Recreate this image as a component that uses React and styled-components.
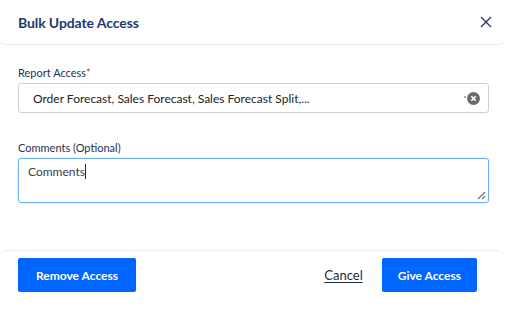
import React from 'react';
import styled, { createGlobalStyle } from 'styled-components';

const GlobalStyle = createGlobalStyle`
  html, body {
    margin: 0;
    padding: 0;
    background: #ffffff;
    font-family: Lato, "Liberation Sans", sans-serif;
  }
`;

const Dialog = styled.div`
  width: 504px;
  height: 313px;
  display: flex;
  flex-direction: column;
  background: #fff;
`;

const Header = styled.div`
  height: 45px;
  box-sizing: border-box;
  display: flex;
  align-items: center;
  justify-content: space-between;
  padding: 0 10px 0 18px;
  border-bottom: 1px solid #ececec;
  border-radius: 0 0 6px 6px;
  box-shadow: 0 1px 2px rgba(0, 0, 0, 0.03);
`;

const Title = styled.h2`
  margin: 0;
  font-size: 14px;
  font-weight: 700;
  color: #1c3a6e;
  letter-spacing: -0.1px;
`;

const CloseButton = styled.button`
  border: none;
  background: none;
  padding: 0;
  width: 16px;
  height: 16px;
  display: flex;
  align-items: center;
  justify-content: center;
  cursor: pointer;
`;

const Body = styled.div`
  flex: 1;
  padding: 21px 15px 0 18px;
  display: flex;
  flex-direction: column;
`;

const Field = styled.div`
  display: flex;
  flex-direction: column;
  margin-bottom: ${(p) => p.gap || 0}px;
`;

const Label = styled.label`
  font-size: 11px;
  color: #1f3150;
  line-height: 14px;
  margin-bottom: 3px;
  span {
    color: #e0393e;
  }
`;

const SelectBox = styled.div`
  height: 30px;
  box-sizing: border-box;
  border: 1px solid #cfcfcf;
  border-radius: 3px;
  display: flex;
  align-items: center;
  padding: 0 8px 0 14px;
  font-size: 12px;
  color: #222;
`;

const SelectText = styled.div`
  flex: 1;
  white-space: nowrap;
  overflow: hidden;
`;

const ClearIcon = styled.div`
  display: flex;
  align-items: center;
  gap: 1px;
  i {
    width: 2px;
    height: 2px;
    background: #8a8a8a;
    border-radius: 1px;
    margin-top: -3px;
  }
`;

const TextArea = styled.div`
  height: 45px;
  box-sizing: border-box;
  border: 1px solid #6fb0f2;
  border-radius: 3px;
  box-shadow: 0 0 2px rgba(90, 160, 240, 0.45);
  padding: 5px 9px;
  font-size: 12px;
  color: #3a3f4a;
  position: relative;
`;

const Caret = styled.span`
  display: inline-block;
  width: 1px;
  height: 15px;
  background: #1c2940;
  vertical-align: -3px;
`;

const Grip = styled.svg`
  position: absolute;
  right: 2px;
  bottom: 2px;
`;

const Footer = styled.div`
  height: 63px;
  box-sizing: border-box;
  border-top: 1px solid #ececec;
  border-radius: 6px 6px 0 0;
  display: flex;
  align-items: flex-start;
  padding: 7px 27px 0 18px;
`;

const Button = styled.button`
  height: 34px;
  padding: 0 ${(p) => p.px}px;
  border: none;
  border-radius: 2px;
  background: #0066ff;
  color: #fff;
  font-family: Lato, "Liberation Sans", sans-serif;
  font-weight: 700;
  font-size: 12px;
  cursor: pointer;
`;

const Spacer = styled.div`
  flex: 1;
`;

const CancelLink = styled.button`
  border: none;
  background: none;
  padding: 0;
  height: 34px;
  margin-right: 19px;
  font-family: Lato, "Liberation Sans", sans-serif;
  font-size: 13px;
  color: #1f2a3e;
  text-decoration: underline;
  text-underline-offset: 2px;
  cursor: pointer;
`;

export default function App() {
  return (
    <>
      <GlobalStyle />
      <Dialog>
        <Header>
          <Title>Bulk Update Access</Title>
          <CloseButton>
            <svg width="12" height="12" viewBox="0 0 12 12">
              <path d="M1 1L11 11M11 1L1 11" stroke="#1c3a6e" strokeWidth="1.3" />
            </svg>
          </CloseButton>
        </Header>
        <Body>
          <Field gap={28}>
            <Label>
              Report Access<span>*</span>
            </Label>
            <SelectBox>
              <SelectText>Order Forecast, Sales Forecast, Sales Forecast Split,...</SelectText>
              <ClearIcon>
                <i />
                <svg width="13" height="13" viewBox="0 0 13 13">
                  <circle cx="6.5" cy="6.5" r="6.5" fill="#6b6b6b" />
                  <path d="M4.3 4.3L8.7 8.7M8.7 4.3L4.3 8.7" stroke="#fff" strokeWidth="1.6" />
                </svg>
              </ClearIcon>
            </SelectBox>
          </Field>
          <Field>
            <Label>Comments (Optional)</Label>
            <TextArea>
              Comments<Caret />
              <Grip width="9" height="9" viewBox="0 0 9 9">
                <path d="M1 8L8 1M5 8L8 5" stroke="#6b6b6b" strokeWidth="1.1" />
              </Grip>
            </TextArea>
          </Field>
        </Body>
        <Footer>
          <Button px={18}>Remove Access</Button>
          <Spacer />
          <CancelLink>Cancel</CancelLink>
          <Button px={16}>Give Access</Button>
        </Footer>
      </Dialog>
    </>
  );
}
